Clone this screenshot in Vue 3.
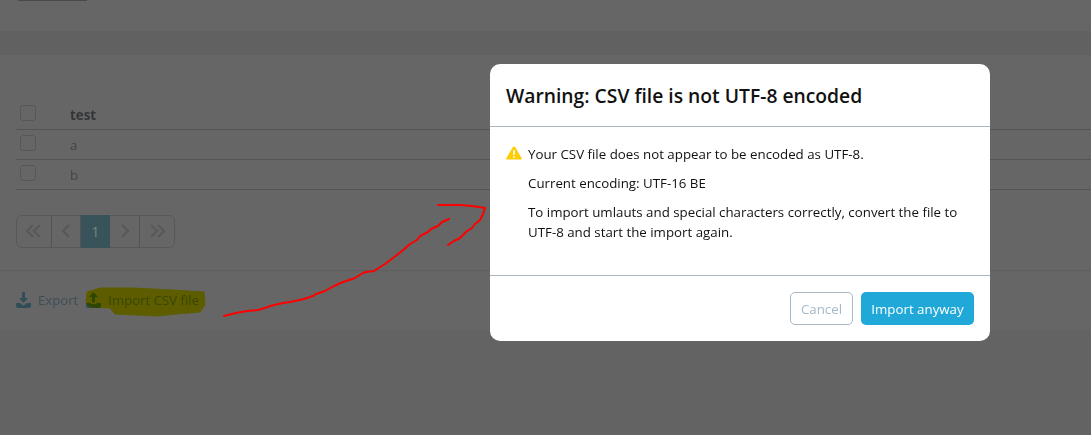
<script setup>
const rows = ['a', 'b']
const main = 'M224 316 L236 313 L247 311 L258 310 L268 307 L270 306 L283 303 L290 302 L304 299 L313 296 L316 294 L325 291 L334 286 L343 282 L346 281 L355 278 L363 273 L366 272 L374 271 L377 269 L385 264 L393 258 L402 251 L410 244 L417 240 L420 236 L428 232 L431 229 L438 226 L442 222 L449 219'
const head = 'M438 205 L448 205 L460 205 L472 206 L485 208 L483 214 L480 220 L475 224 L472 228 L467 231 L460 238 L454 241 L448 245'
const blob = 'M87 292 L100 288 L133 288 L173 290 L204 292 L205 305 L200 312 L177 314 L157 316 L115 314 L110 308 L90 307 L86 303 Z'
</script>

<template>
  <div class="screen">
    <div class="page">
      <div class="top"><div class="stub"></div></div>
      <div class="band"></div>
      <section class="card">
        <table class="grid">
          <thead>
            <tr>
              <th class="check"><span class="box"></span></th>
              <th class="cell">test</th>
            </tr>
          </thead>
          <tbody>
            <tr v-for="r in rows" :key="r">
              <td class="check"><span class="box"></span></td>
              <td class="cell">{{ r }}</td>
            </tr>
          </tbody>
        </table>
        <nav class="pager">
          <span class="pg">
            <svg width="18" height="14" viewBox="0 0 18 14"><path d="M8 1 L2 7 L8 13 M15 1 L9 7 L15 13" /></svg>
          </span>
          <span class="pg narrow">
            <svg width="10" height="14" viewBox="0 0 10 14"><path d="M8 1 L2 7 L8 13" /></svg>
          </span>
          <span class="pg active"><span class="num">1</span></span>
          <span class="pg narrow">
            <svg width="10" height="14" viewBox="0 0 10 14"><path d="M2 1 L8 7 L2 13" /></svg>
          </span>
          <span class="pg last">
            <svg width="18" height="14" viewBox="0 0 18 14"><path d="M3 1 L9 7 L3 13 M10 1 L16 7 L10 13" /></svg>
          </span>
        </nav>
        <footer class="actions">
          <a class="action">
            <svg class="ic" width="15" height="16" viewBox="0 0 15 16"><path d="M6 0 H9 V6 H12 L7.5 11 L3 6 H6 Z M0.5 11 H4 L7.5 13.5 L11 11 H14.5 Q15 11 15 12 V14 Q15 16 13 16 H2 Q0 16 0 14 V12 Q0 11 0.5 11 Z" /></svg>
            Export
          </a>
          <a class="action">
            <svg class="ic" width="15" height="16" viewBox="0 0 15 16"><path d="M7.5 0 L12 5 H9 V10.5 H6 V5 H3 Z M0.5 11 H4.5 V12 H10.5 V11 H14.5 Q15 11 15 12 V14 Q15 16 13 16 H2 Q0 16 0 14 V12 Q0 11 0.5 11 Z" /></svg>
            Import CSV file
          </a>
        </footer>
      </section>
      <div class="rest"></div>
    </div>

    <svg class="marker" width="1091" height="435" viewBox="0 0 1091 435">
      <path :d="blob" />
    </svg>

    <div class="overlay"></div>

    <svg class="scribble" width="1091" height="435" viewBox="0 0 1091 435">
      <path :d="main" />
      <path :d="head" />
    </svg>

    <div class="modal" role="dialog">
      <h2 class="title">Warning: CSV file is not UTF-8 encoded</h2>
      <div class="body">
        <div class="msg">
          <svg class="warn" width="16" height="14" viewBox="0 0 16 14">
            <path d="M8 0.4 Q8.7 0.4 9.1 1 L15.7 12.2 Q16.3 13.6 14.8 13.6 H1.2 Q-0.3 13.6 0.3 12.2 L6.9 1 Q7.3 0.4 8 0.4 Z" fill="#ffcc00" />
            <rect x="7.2" y="4" width="1.6" height="5" fill="#fff" />
            <rect x="7.2" y="10.1" width="1.6" height="1.7" fill="#fff" />
          </svg>
          <div class="lines">
            <p>Your CSV file does not appear to be encoded as UTF-8.</p>
            <p>Current encoding: UTF-16 BE</p>
            <p>To import umlauts and special characters correctly, convert the file to UTF-8 and start the import again.</p>
          </div>
        </div>
      </div>
      <div class="foot">
        <button class="btn ghost">Cancel</button>
        <button class="btn primary">Import anyway</button>
      </div>
    </div>
  </div>
</template>

<style>
html, body { margin: 0; background: #646464; }
</style>

<style scoped>
.screen {
  position: relative;
  width: 1091px;
  height: 435px;
  overflow: hidden;
  font-family: "Open Sans", "Noto Sans", sans-serif;
  font-size: 13px;
  color: #212529;
}
.page { display: flex; flex-direction: column; height: 100%; background: #f8f8f8; }
.top { height: 31px; background: #fff; padding-left: 18px; }
.stub { width: 69px; height: 1px; background: #b5bcc4; }
.band { height: 24px; background: #f2f2f2; }
.card {
  height: 275px;
  background: #fff;
  display: flex;
  flex-direction: column;
  padding-top: 44px;
  box-sizing: border-box;
}
.grid {
  border-collapse: collapse;
  width: 1075px;
  margin-left: 16px;
  table-layout: fixed;
}
.grid th, .grid td {
  height: 30px;
  padding: 0;
  text-align: left;
  border-bottom: 1px solid #d2d2d2;
  box-sizing: border-box;
  font-size: 13.3px;
  color: #a8a8a8;
}
.grid th { font-weight: 700; color: #808488; }
.grid .check { width: 54px; padding-left: 4px; padding-bottom: 2px; }
.grid .cell { padding-top: 2px; }
.box {
  display: block;
  width: 14px;
  height: 14px;
  border: 1px solid #d8dadc;
  border-radius: 3px;
}
.pager {
  display: flex;
  align-self: flex-start;
  margin: 25px 0 0 16px;
  height: 33px;
  border: 1px solid #dcdcdc;
  border-radius: 6px;
  box-sizing: border-box;
}
.pg {
  display: flex;
  align-items: center;
  justify-content: center;
  width: 35px;
  border-right: 1px solid #d2d2d2;
  box-sizing: border-box;
  font-size: 14px;
}
.pg.narrow { width: 29px; }
.pg.active { width: 29px; background: #90d0e4; border-right: 0; margin: -1px 0; }
.num { position: relative; z-index: 1; color: #7d8588; }
.pg.narrow:nth-child(4) { width: 30px; }
.pg.last { border-right: 0; width: 34px; }
.pg svg path { fill: none; stroke: #dcdcdc; stroke-width: 2.2; }
.actions {
  margin-top: 22px;
  border-top: 1px solid #ebebeb;
  display: flex;
  align-items: center;
  padding: 20px 0 0 16px;
  gap: 8px;
}
.action {
  display: flex;
  align-items: center;
  gap: 7px;
  color: #9cc4d6;
  font-size: 13.2px;
}
.ic path { fill: #7cc0dc; }
.rest { flex: 1; }
.marker { position: absolute; inset: 0; mix-blend-mode: multiply; }
.marker path { fill: #e8e800; stroke: #e8e800; stroke-width: 1; stroke-linejoin: round; }
.overlay { position: absolute; inset: 0; background: rgba(0, 0, 0, 0.6); }
.scribble { position: absolute; inset: 0; }
.scribble path { fill: none; stroke: #ff0000; stroke-width: 2; stroke-linejoin: round; stroke-linecap: round; }
.modal {
  position: absolute;
  left: 490px;
  top: 64px;
  width: 500px;
  height: 277px;
  background: #fff;
  border-radius: 10px;
  display: flex;
  flex-direction: column;
  color: #111;
}
.title {
  margin: 0;
  height: 63px;
  padding: 0 16px;
  display: flex;
  align-items: center;
  font-size: 19.3px;
  font-weight: 600;
  border-bottom: 1px solid #a6b8c6;
  box-sizing: border-box;
}
.body { flex: 1; padding: 17px 16px 0; box-sizing: border-box; }
.msg { display: flex; gap: 6px; }
.warn { flex: none; margin-top: 2px; }
.lines p { margin: 0 0 9px; line-height: 20px; font-size: 13.3px; }
.foot {
  height: 66px;
  box-sizing: border-box;
  border-top: 1px solid #a6b8c6;
  padding: 16px;
  display: flex;
  justify-content: flex-end;
  gap: 8px;
}
.btn {
  height: 33px;
  border-radius: 5px;
  font-family: inherit;
  font-size: 13.3px;
  padding: 0;
}
.ghost { width: 63px; background: #fff; border: 1px solid #a6b8c6; color: #a6b8c6; }
.primary { width: 113px; background: #1fa8d8; border: 0; color: #fff; font-weight: 500; }
</style>
